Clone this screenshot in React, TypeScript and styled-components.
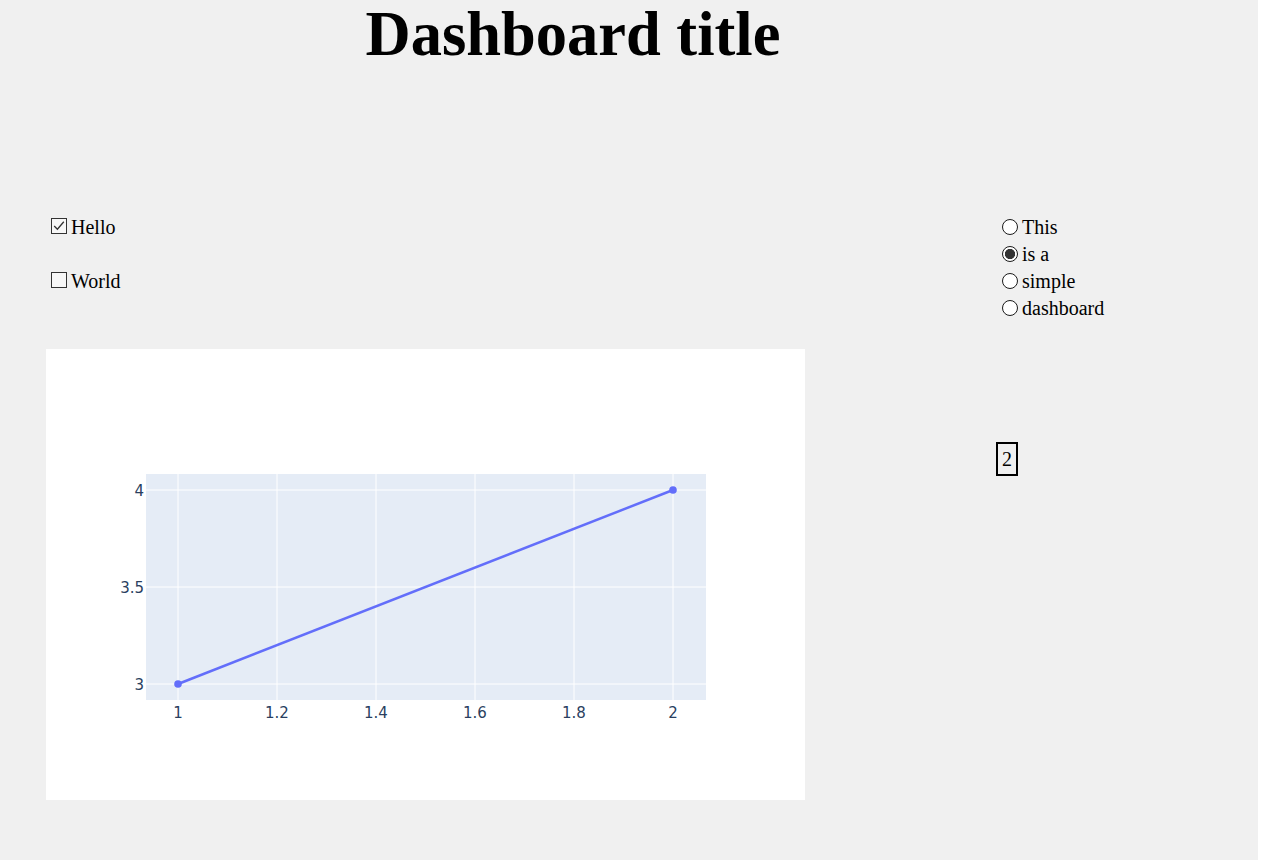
import React from "react";
import styled, { createGlobalStyle } from "styled-components";

const GlobalStyle = createGlobalStyle`
  html, body { margin: 0; padding: 0; background: #ffffff; }
  body { font-family: "Liberation Serif", "Times New Roman", serif; color: #000; }
`;

const Page = styled.div`
  width: 1258px;
  height: 860px;
  background: #f0f0f0;
  overflow: hidden;
`;

const Title = styled.h1`
  margin: 0;
  width: 1146px;
  text-align: center;
  font-family: "Liberation Serif", "Times New Roman", serif;
  font-weight: 700;
  font-size: 62.5px;
  line-height: 68px;
`;

const Body = styled.div`
  display: grid;
  grid-template-columns: 950px 1fr;
  padding-left: 46px;
  margin-top: 145px;
`;

const Column = styled.div`
  display: flex;
  flex-direction: column;
  align-items: flex-start;
`;

const CheckList = styled.div`
  display: flex;
  flex-direction: column;
  gap: 27px;
  padding-left: 5px;
`;

const OptionRow = styled.label`
  display: flex;
  align-items: center;
  gap: 4px;
  height: 27px;
  padding-top: 2px;
  box-sizing: border-box;
  font-size: 20px;
  line-height: 23px;
`;

const Box = styled.span<{ $checked?: boolean }>`
  width: 16px;
  height: 16px;
  box-sizing: border-box;
  border: 1px solid #333;
  background: #f7f7f7;
  display: flex;
  align-items: center;
  justify-content: center;
  margin-top: -3px;
`;

const RadioList = styled.div`
  display: flex;
  flex-direction: column;
  padding-left: 6px;
`;

const Circle = styled.span<{ $checked?: boolean }>`
  width: 16px;
  height: 16px;
  box-sizing: border-box;
  border-radius: 50%;
  border: 1px solid #1a1a1a;
  background: ${(p) =>
    p.$checked
      ? "radial-gradient(circle, #333 0 4.8px, #fff 5.4px 100%)"
      : "#fff"};
  margin-top: -2px;
`;

const ChartCard = styled.div`
  margin-top: 55px;
  width: 759px;
  height: 451px;
  background: #ffffff;
`;

const ValueBox = styled.div`
  margin-top: 121px;
  width: 22px;
  height: 34px;
  box-sizing: border-box;
  border: 2px solid #000;
  display: flex;
  align-items: center;
  justify-content: center;
  font-size: 20px;
`;

const Check = () => (
  <svg width="14" height="14" viewBox="0 0 14 14">
    <path d="M2.2 7 L5.4 10.2 L11.8 2.8" fill="none" stroke="#333" strokeWidth="1.3" />
  </svg>
);

const xTicks = [1, 1.2, 1.4, 1.6, 1.8, 2];
const yTicks = [4, 3.5, 3];
const xPos = (v: number) => 132 + (v - 1) * 495;
const yPos = (v: number) => 335 - (v - 3) * 194;

const Chart = () => (
  <svg width="759" height="451" viewBox="0 0 759 451">
    <rect x="100" y="125" width="560" height="226" fill="#e5ecf6" />
    {xTicks.map((t) => (
      <line key={"gx" + t} x1={xPos(t)} x2={xPos(t)} y1="125" y2="351" stroke="#fff" strokeWidth="1" />
    ))}
    {yTicks.map((t) => (
      <line key={"gy" + t} x1="100" x2="660" y1={yPos(t)} y2={yPos(t)} stroke="#fff" strokeWidth="1" />
    ))}
    <line x1={xPos(1)} y1={yPos(3)} x2={xPos(2)} y2={yPos(4)} stroke="#636efa" strokeWidth="2.5" />
    <circle cx={xPos(1)} cy={yPos(3)} r="3.8" fill="#636efa" />
    <circle cx={xPos(2)} cy={yPos(4)} r="3.8" fill="#636efa" />
    <g fontFamily='"DejaVu Sans", Verdana, sans-serif' fontSize="15" fill="#2a3f5f">
      {xTicks.map((t) => (
        <text key={"tx" + t} x={xPos(t)} y="369" textAnchor="middle">
          {String(t)}
        </text>
      ))}
      {yTicks.map((t) => (
        <text key={"ty" + t} x="98" y={yPos(t) + 5.5} textAnchor="end">
          {String(t)}
        </text>
      ))}
    </g>
  </svg>
);

export default function App() {
  return (
    <>
      <GlobalStyle />
      <Page>
        <Title>Dashboard title</Title>
        <Body>
          <Column>
            <CheckList>
              <OptionRow>
                <Box $checked>
                  <Check />
                </Box>
                Hello
              </OptionRow>
              <OptionRow>
                <Box />
                World
              </OptionRow>
            </CheckList>
            <ChartCard>
              <Chart />
            </ChartCard>
          </Column>
          <Column>
            <RadioList>
              {["This", "is a", "simple", "dashboard"].map((l) => (
                <OptionRow key={l}>
                  <Circle $checked={l === "is a"} />
                  {l}
                </OptionRow>
              ))}
            </RadioList>
            <ValueBox>2</ValueBox>
          </Column>
        </Body>
      </Page>
    </>
  );
}
